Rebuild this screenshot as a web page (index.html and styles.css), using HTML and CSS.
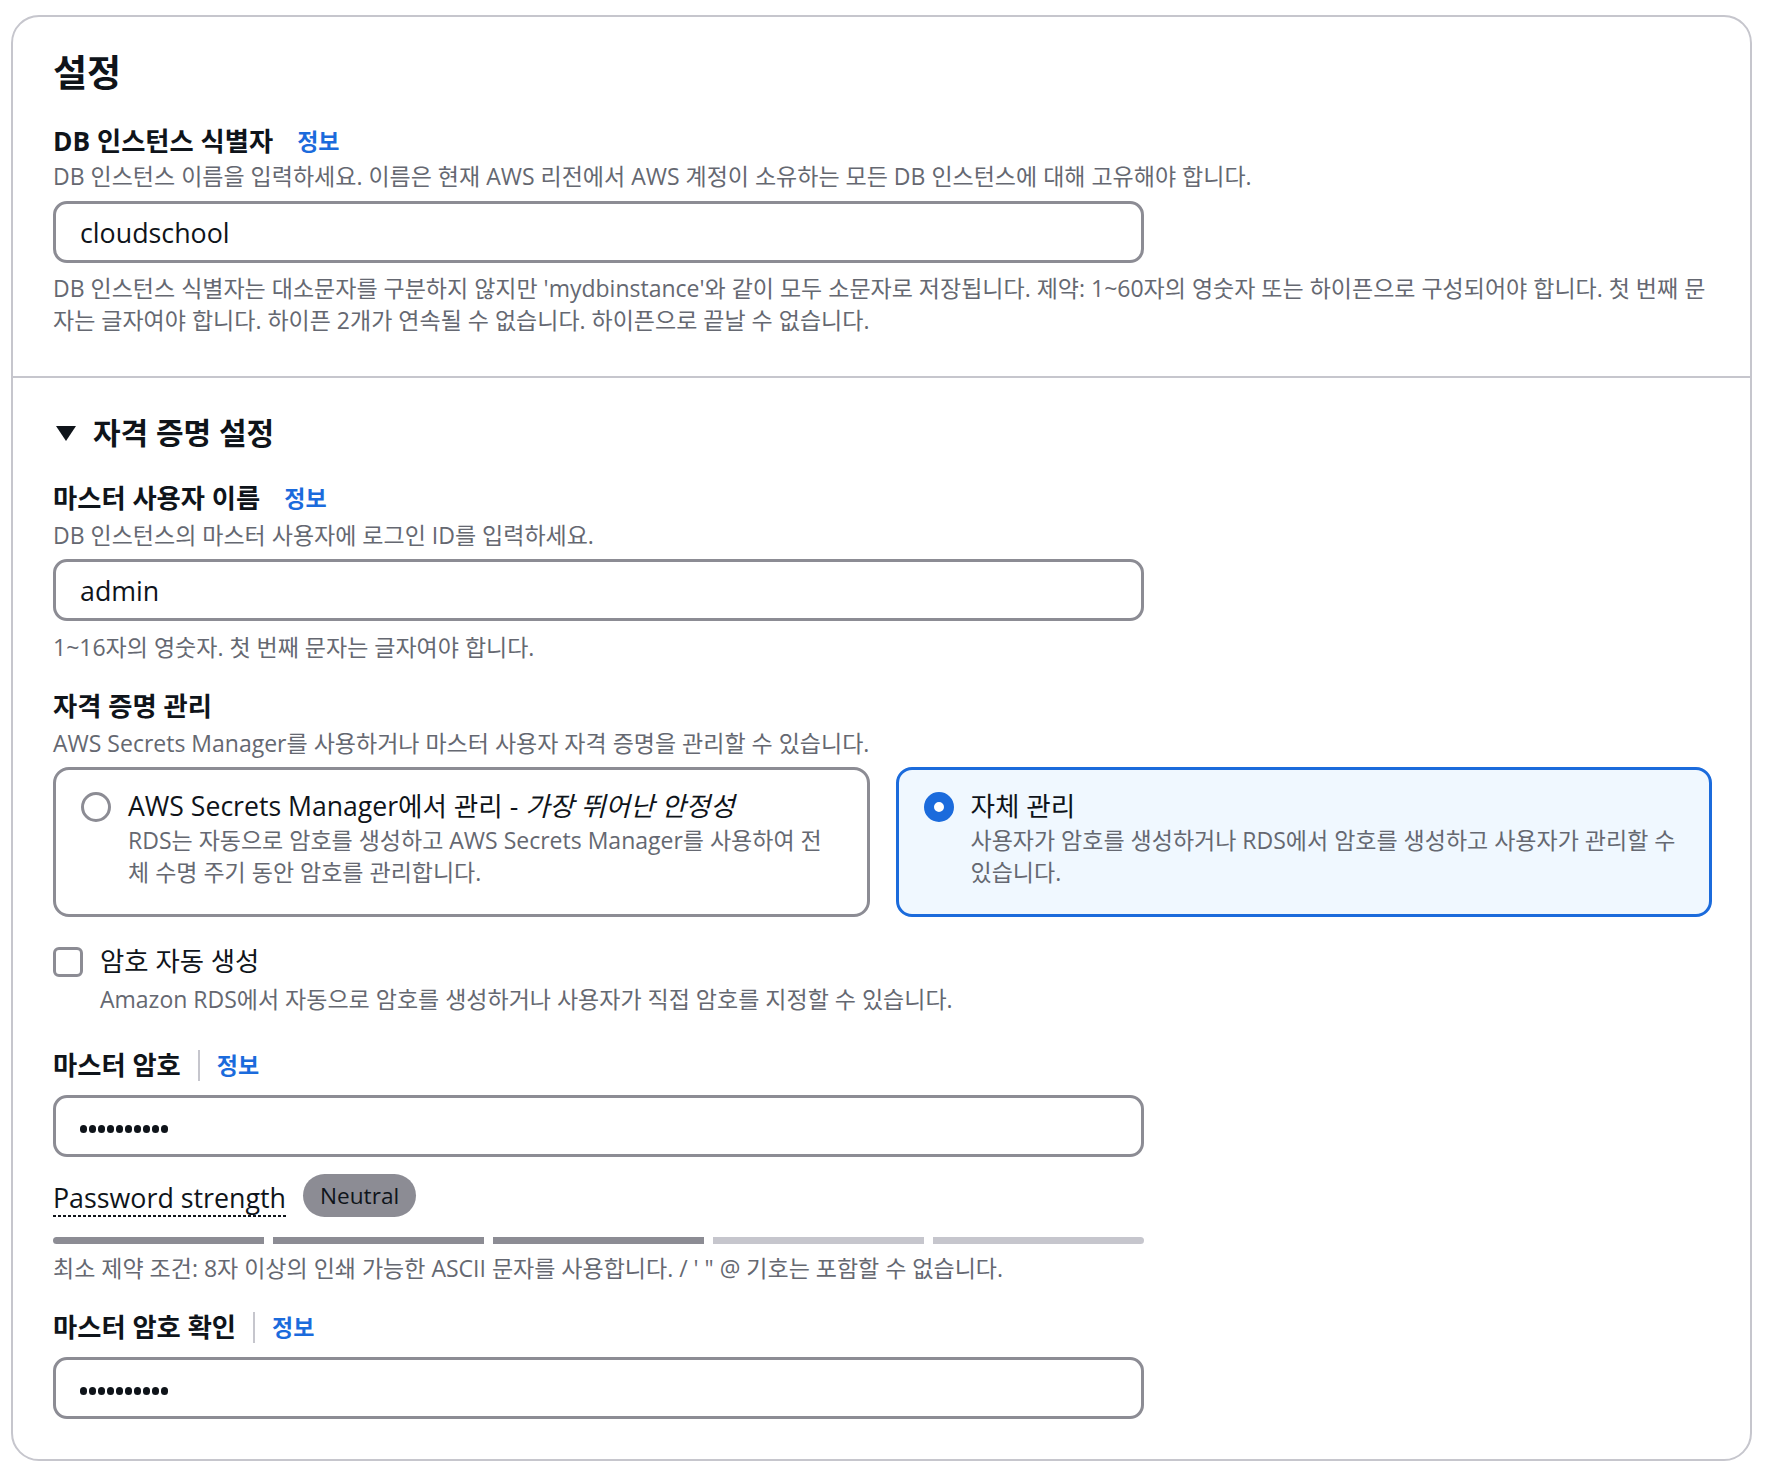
FILE: index.html
```html
<!DOCTYPE html>
<html lang="ko">
<head>
<meta charset="utf-8">
<title>설정</title>
<link rel="stylesheet" href="styles.css">
</head>
<body>
<div class="page">
  <div class="container">
    <section class="section section-top">
      <h2 class="h-main">설정</h2>
      <div class="label-row lr-first">
        <span class="label">DB 인스턴스 식별자</span><a class="info info-gap">정보</a>
      </div>
      <div class="desc d-tight">DB 인스턴스 이름을 입력하세요. 이름은 현재 AWS 리전에서 AWS 계정이 소유하는 모든 DB 인스턴스에 대해 고유해야 합니다.</div>
      <div class="form-col">
        <input class="input in-after-desc" type="text" value="cloudschool" readonly>
      </div>
      <div class="desc hint-after-input">DB 인스턴스 식별자는 대소문자를 구분하지 않지만 'mydbinstance'와 같이 모두 소문자로 저장됩니다. 제약: 1~60자의 영숫자 또는 하이픈으로 구성되어야 합니다. 첫 번째 문자는 글자여야 합니다. 하이픈 2개가 연속될 수 없습니다. 하이픈으로 끝날 수 없습니다.</div>
    </section>

    <section class="section section-cred">
      <h3 class="h-expand"><span class="caret" aria-hidden="true"></span>자격 증명 설정</h3>

      <div class="label-row lr-master">
        <span class="label">마스터 사용자 이름</span><a class="info info-gap">정보</a>
      </div>
      <div class="desc d-tight2">DB 인스턴스의 마스터 사용자에 로그인 ID를 입력하세요.</div>
      <div class="form-col">
        <input class="input in-after-desc2" type="text" value="admin" readonly>
      </div>
      <div class="desc hint-after-input2">1~16자의 영숫자. 첫 번째 문자는 글자여야 합니다.</div>

      <div class="label-row lr-manage">
        <span class="label">자격 증명 관리</span>
      </div>
      <div class="desc d-tight2">AWS Secrets Manager를 사용하거나 마스터 사용자 자격 증명을 관리할 수 있습니다.</div>

      <div class="tiles">
        <div class="tile">
          <span class="radio"></span>
          <div class="tile-body">
            <div class="tile-label">AWS Secrets Manager에서 관리 - <i>가장 뛰어난 안정성</i></div>
            <div class="tile-desc">RDS는 자동으로 암호를 생성하고 AWS Secrets Manager를 사용하여 전체 수명 주기 동안 암호를 관리합니다.</div>
          </div>
        </div>
        <div class="tile tile-selected">
          <span class="radio radio-on"></span>
          <div class="tile-body">
            <div class="tile-label">자체 관리</div>
            <div class="tile-desc">사용자가 암호를 생성하거나 RDS에서 암호를 생성하고 사용자가 관리할 수 있습니다.</div>
          </div>
        </div>
      </div>

      <div class="check-row">
        <span class="checkbox"></span>
        <span class="check-label">암호 자동 생성</span>
      </div>
      <div class="desc check-desc">Amazon RDS에서 자동으로 암호를 생성하거나 사용자가 직접 암호를 지정할 수 있습니다.</div>

      <div class="label-row lr-pass">
        <span class="label">마스터 암호</span><span class="sep"></span><a class="info">정보</a>
      </div>
      <div class="form-col">
        <div class="input input-pass in-after-label" role="textbox" aria-label="마스터 암호">
          <span class="dot"></span><span class="dot"></span><span class="dot"></span><span class="dot"></span><span class="dot"></span><span class="dot"></span><span class="dot"></span><span class="dot"></span><span class="dot"></span><span class="dot"></span>
        </div>

        <div class="strength-row">
          <span class="strength-text">Password strength</span>
          <span class="badge">Neutral</span>
        </div>
        <div class="bars">
          <span class="bar bar-on"></span>
          <span class="bar bar-on"></span>
          <span class="bar bar-on"></span>
          <span class="bar"></span>
          <span class="bar"></span>
        </div>
      </div>
      <div class="desc hint-after-bars">최소 제약 조건: 8자 이상의 인쇄 가능한 ASCII 문자를 사용합니다. / ' " @ 기호는 포함할 수 없습니다.</div>

      <div class="label-row lr-confirm">
        <span class="label">마스터 암호 확인</span><span class="sep"></span><a class="info">정보</a>
      </div>
      <div class="form-col">
        <div class="input input-pass in-after-label" role="textbox" aria-label="마스터 암호 확인">
          <span class="dot"></span><span class="dot"></span><span class="dot"></span><span class="dot"></span><span class="dot"></span><span class="dot"></span><span class="dot"></span><span class="dot"></span><span class="dot"></span><span class="dot"></span>
        </div>
      </div>
    </section>
  </div>
</div>
</body>
</html>
```

FILE: styles.css
```css
html, body {
  margin: 0;
  padding: 0;
  background: #ffffff;
}

body {
  font-family: "Open Sans", "Noto Sans CJK KR", sans-serif;
  color: #0f141a;
}

.page {
  padding: 15px 20px 17px 11px;
}

.container {
  border: 2px solid #c6c6cd;
  border-radius: 28px;
  background: #ffffff;
}

.section {
  padding: 0 38px 40px 40px;
}

.section-top {
  padding-top: 32px;
}

.section-cred {
  border-top: 2px solid #c6c6cd;
  padding-top: 35px;
}

.h-main {
  margin: 0;
  font-size: 37px;
  line-height: 48px;
  font-weight: 700;
}

.h-expand {
  margin: 0;
  display: flex;
  align-items: center;
  font-size: 30px;
  line-height: 40px;
  font-weight: 700;
}

.caret {
  width: 0;
  height: 0;
  margin-left: 3px;
  margin-right: 17px;
  border-left: 10px solid transparent;
  border-right: 10px solid transparent;
  border-top: 15px solid #0f141a;
}

.label-row {
  display: flex;
  align-items: center;
  height: 34px;
}

.label {
  font-size: 26.3px;
  line-height: 34px;
  font-weight: 700;
}

.info {
  color: #1b6bdc;
  font-size: 23px;
  line-height: 34px;
  font-weight: 700;
  cursor: pointer;
}

.info-gap {
  margin-left: 24px;
}

.sep {
  width: 2px;
  height: 31px;
  background: #c6c6cd;
  margin: 0 17px;
}

.lr-first { margin-top: 27px; }
.lr-master { margin-top: 28px; }
.lr-manage { margin-top: 26px; }
.lr-pass { margin-top: 33px; }
.lr-confirm { margin-top: 26px; }

.desc {
  font-size: 23px;
  line-height: 32px;
  color: #656871;
}

.d-tight { margin-top: 2px; }
.d-tight2 { margin-top: 4px; }
.hint-after-input { margin-top: 9px; }
.hint-after-input2 { margin-top: 10px; }
.hint-after-bars { margin-top: 8px; }

.form-col {
  width: 1091px;
}

.input {
  display: block;
  box-sizing: border-box;
  width: 100%;
  height: 62px;
  border: 3px solid #8c8c94;
  border-radius: 14px;
  padding: 0 24px;
  font-family: "Open Sans", "Noto Sans CJK KR", sans-serif;
  font-size: 26.8px;
  color: #0f141a;
  background: #ffffff;
  outline: none;
}

.input-pass {
  display: flex;
  align-items: center;
  gap: 1.6px;
  padding-left: 24px;
  padding-top: 6px;
}

.dot {
  flex: none;
  width: 7.4px;
  height: 7.4px;
  border-radius: 50%;
  background: #0f141a;
}

.in-after-desc { margin-top: 9px; }
.in-after-desc2 { margin-top: 8px; }
.in-after-label { margin-top: 13px; }

.tiles {
  margin-top: 8px;
  display: grid;
  grid-template-columns: 1fr 1fr;
  gap: 26px;
}

.tile {
  display: flex;
  gap: 17px;
  border: 3px solid #8c8c94;
  border-radius: 16px;
  padding: 19px 25px 26px 25px;
  background: #ffffff;
}

.tile-selected {
  border-color: #1b6bdc;
  background: #f0f8ff;
}

.radio {
  flex: none;
  box-sizing: border-box;
  width: 30px;
  height: 30px;
  margin-top: 2.5px;
  border: 3.4px solid #8c8c94;
  border-radius: 50%;
  background: #ffffff;
}

.radio-on {
  border: 10px solid #1b6bdc;
}

.tile-body {
  flex: 1;
  min-width: 0;
}

.tile-label {
  font-size: 26.6px;
  line-height: 35px;
}

.tile-desc {
  font-size: 23px;
  line-height: 32px;
  color: #656871;
}

.check-row {
  margin-top: 27px;
  display: flex;
  align-items: center;
  height: 35px;
}

.checkbox {
  box-sizing: border-box;
  width: 30px;
  height: 30px;
  border: 3px solid #8c8c94;
  border-radius: 6px;
  margin-right: 17px;
  background: #ffffff;
}

.check-label {
  font-size: 26.4px;
  line-height: 35px;
}

.check-desc {
  margin-top: 4px;
  padding-left: 47px;
}

.strength-row {
  margin-top: 17px;
  display: flex;
  align-items: flex-end;
  gap: 17px;
}

.strength-text {
  font-size: 26.8px;
  line-height: 35px;
  padding-bottom: 2px;
  background-image: repeating-linear-gradient(to right, #0f141a 0 3px, transparent 3px 5px);
  background-size: 100% 2px;
  background-position: left bottom;
  background-repeat: no-repeat;
}

.badge {
  height: 43px;
  line-height: 43px;
  padding: 0 17px;
  border-radius: 22px;
  background: #8c8c94;
  color: #0f141a;
  font-size: 22.6px;
}

.bars {
  margin-top: 20px;
  display: flex;
  gap: 9px;
  height: 7px;
  border-radius: 4px;
  overflow: hidden;
}

.bar {
  flex: 1;
  background: #c6c6cd;
}

.bar-on {
  background: #8c8c94;
}
```
